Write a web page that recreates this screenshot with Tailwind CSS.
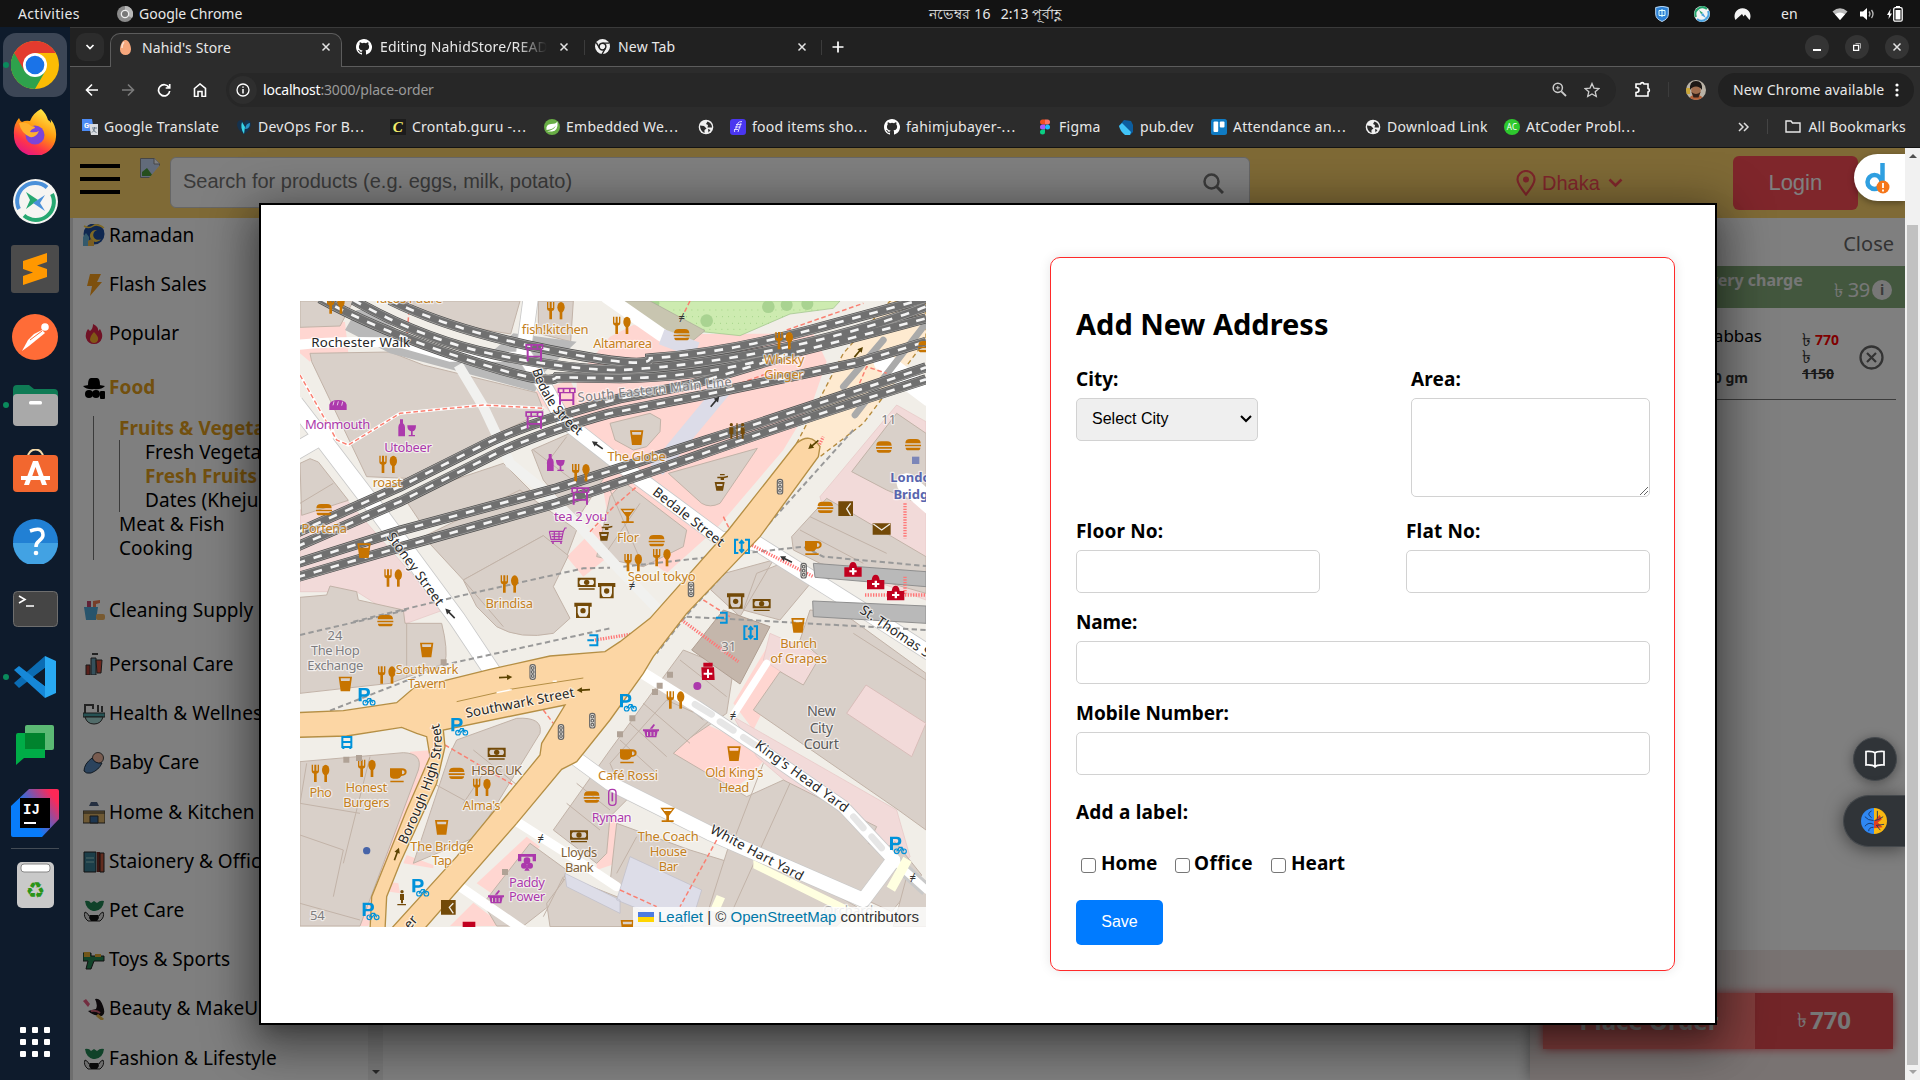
<!DOCTYPE html>
<html lang="en">
<head>
<meta charset="utf-8">
<title>Nahid's Store</title>
<script src="https://cdn.jsdelivr.net/npm/@tailwindcss/browser@4"></script>
</head>
<body class="w-[1920px] h-[1080px] overflow-hidden flex flex-col bg-[#0e1b2c] font-['Noto_Sans',sans-serif] text-[14px]">

<!-- shared symbols -->
<svg width="0" height="0" class="absolute">
  <defs>
    <symbol id="gh" viewBox="0 0 16 16"><path fill="#fff" d="M8 0C3.58 0 0 3.58 0 8c0 3.54 2.29 6.53 5.47 7.59.4.07.55-.17.55-.38 0-.19-.01-.82-.01-1.49-2.01.37-2.53-.49-2.69-.94-.09-.23-.48-.94-.82-1.13-.28-.15-.68-.52-.01-.53.63-.01 1.08.58 1.23.82.72 1.21 1.87.87 2.33.66.07-.52.28-.87.51-1.07-1.78-.2-3.64-.89-3.64-3.95 0-.87.31-1.59.82-2.15-.08-.2-.36-1.02.08-2.12 0 0 .67-.21 2.2.82a7.6 7.6 0 0 1 4 0c1.53-1.04 2.2-.82 2.2-.82.44 1.1.16 1.92.08 2.12.51.56.82 1.27.82 2.15 0 3.07-1.87 3.75-3.65 3.95.29.25.54.73.54 1.48 0 1.07-.01 1.93-.01 2.2 0 .21.15.46.55.38A8 8 0 0 0 8 0z"/></symbol>
    <symbol id="x" viewBox="0 0 10 10"><path d="M1.5 1.5l7 7M8.5 1.5l-7 7" stroke="#e3e3e3" stroke-width="1.5"/></symbol>
    <symbol id="globe" viewBox="0 0 16 16"><circle cx="8" cy="8" r="7.3" fill="#f0f0f0"/><path d="M2 6.500l4 .5 2.500 2.500-2 1.500v3Q2 12 2 6.500zM9.500 2.500L8 5l2 1-.5 2.500H14Q14 4 9.500 2.500zM10 10l2.500 1-2 2.500z" fill="#2c2c2c"/></symbol>
    <symbol id="mono" viewBox="0 0 16 16"><circle cx="8" cy="8" r="8" fill="#f1f1f1"/><circle cx="8" cy="8" r="3.6" fill="#f1f1f1" stroke="#222" stroke-width="1.600"/><path d="M8 4.400h7M4.900 9.800L1.400 3.800M11.100 9.800L7.600 16" stroke="#222" stroke-width="1.500"/></symbol>
  </defs>
</svg>

<!-- GNOME top bar -->
<header class="h-[27px] shrink-0 bg-[#131313] text-[#e8e8e8] flex items-center relative">
  <span class="pl-[18px] w-[117px] tracking-[0.35px]">Activities</span>
  <svg class="size-4 mr-[6px]" viewBox="0 0 16 16"><circle cx="8" cy="8" r="8" fill="#8a8a8a"/><path d="M8 8V0a8 8 0 0 1 7 12z" fill="#b8b8b8"/><circle cx="8" cy="8" r="4.300" fill="#eee"/><circle cx="8" cy="8" r="3" fill="#777"/></svg>
  <span>Google Chrome</span>
  <div class="absolute left-[929px] top-0 h-[26px] flex items-center gap-[10px] whitespace-nowrap"><span class="tracking-[0.3px]">নভেম্বর 16</span><span>2:13 পূর্বাহ্ণ</span></div>
  <div class="ml-auto flex items-center">
    <svg class="w-[14px] h-4 mr-[25px]" viewBox="0 0 14 16"><path d="M.7 1.500Q7-.8 13.300 1.500V8q0 5-6.300 7.500Q.7 13 .7 8z" fill="#2e82d6" stroke="#b9d9f5"/><path d="M4 4.500h6v5H4zM7 3v8" fill="none" stroke="#dff" stroke-width="1"/></svg>
    <svg class="size-4 mr-[24px]" viewBox="0 0 16 16"><circle cx="8" cy="8" r="8" fill="#f4f4f4"/><path d="M2 11A7 7 0 0 1 13 3" stroke="#25a36c" stroke-width="2" fill="none"/><path d="M14 5A7 7 0 0 1 3 13" stroke="#4aa3e0" stroke-width="2" fill="none"/><path d="M5 4l4 3-2 1z" fill="#25a36c"/><path d="M9 7l3 5-5-3z" fill="#4aa3e0"/></svg>
    <svg class="w-[17px] h-4 mr-[30px]" viewBox="0 0 17 16"><path d="M1.500 14A8 8 0 1 1 15.500 14L11 8.500 9.500 10.500 8 8 3.500 12z" fill="#f4f4f4"/></svg>
    <span class="mr-[35px] w-[16px]">en</span>
    <svg class="w-4 h-3 mr-[12px]" viewBox="0 0 16 12"><path d="M8 12L.5 3.500Q8-3 15.500 3.500z" fill="#bbb"/><path d="M8 12L3 6.300Q8 2.500 13 6.300z" fill="#fff"/></svg>
    <svg class="w-[16px] h-[14px] mr-[11px]" viewBox="0 0 16 14"><path d="M0 4.500h3L7 1v12L3 9.500H0z" fill="#fff"/><path d="M9 4.500q2 2.500 0 5M11.500 3q3 4 0 8" stroke="#bbb" fill="none" stroke-width="1.300"/></svg>
    <svg class="w-[16px] h-[16px] mr-[17px]" viewBox="0 0 16 16"><path d="M3.500 3L0 9h2L1.500 13 5 7.500H3z" fill="#fff"/><rect x="6.700" y="1.700" width="8.500" height="13.500" rx="1.500" fill="none" stroke="#fff" stroke-width="1.300"/><path d="M9 0h4v1H9zM8.500 4h5v9.500h-5z" fill="#fff"/></svg>
  </div>
</header>

<div class="flex h-[1053px]">

<!-- dock -->
<nav class="w-[70px] shrink-0 bg-[#0e1b2c] pt-[4px] flex flex-col items-center">
  <div class="h-[68px] w-full flex items-center justify-center relative">
    <div class="w-[64px] h-[64px] rounded-[13px] bg-[#3c4656] flex items-center justify-center"><svg class="size-12" viewBox="0 0 48 48"><circle cx="24" cy="24" r="24" fill="#fbbc04"/><path d="M3.200 12A24 24 0 0 0 24 48L34.400 30 24 24z" fill="#2ea24c"/><path d="M3.200 12A24 24 0 0 1 44.800 12H24L13.600 30z" fill="#e33b2e"/><circle cx="24" cy="24" r="12" fill="#fff"/><circle cx="24" cy="24" r="9.300" fill="#1a73e8"/></svg></div>
    <i class="absolute left-[3px] top-[31px] size-[6px] rounded-full bg-[#0a8a5c]"></i>
  </div>
  <div class="h-[68px] flex items-center pb-[2px]"><svg class="w-[44px] h-[46px]" viewBox="0 0 44 46"><defs><linearGradient id="ff" x1=".8" y1="0" x2=".3" y2="1"><stop offset="0" stop-color="#fff44f"/><stop offset=".45" stop-color="#ff980e"/><stop offset=".75" stop-color="#ff3647"/><stop offset="1" stop-color="#e31587"/></linearGradient></defs><path d="M28 0Q33 4 35 11q2 1 3 3 0-2-.5-4Q44 18 43 28A21 20 0 0 1 1 26Q0 16 6 9q1 3 3 4 4-2 8-1 3-8 11-12z" fill="url(#ff)"/><circle cx="22" cy="26" r="9.500" fill="#7b45d8"/><path d="M6 14q8-2 12 3 4 0 4 2-4 1-5 4 6 1 9-1-3 7-9 6Q8 24 6 14z" fill="#ffb02e"/></svg></div>
  <div class="h-[68px] flex items-center"><svg class="size-[45px]" viewBox="0 0 45 45"><circle cx="22.500" cy="22.500" r="22.500" fill="#f6f5f2"/><path d="M6 30A18 18 0 0 1 34 8.500" stroke="#4a90d9" stroke-width="4" fill="none"/><path d="M39 15A18 18 0 0 1 11 36.500" stroke="#27a871" stroke-width="4" fill="none"/><path d="M13 13l12 8-12 9 4-9z" fill="#27a871"/><path d="M32 16l-12 8 12 8-5-8z" fill="#4a90d9"/></svg></div>
  <div class="h-[68px] flex items-center"><svg class="size-12" viewBox="0 0 48 48"><rect width="48" height="48" rx="3" fill="#4b4b4b"/><path d="M12 16L36 8v9l-10 3.500L36 24v8l-24 8v-9l10-3.500L12 24z" fill="#ff9800"/></svg></div>
  <div class="h-[68px] flex items-center"><svg class="size-[46px]" viewBox="0 0 46 46"><circle cx="23" cy="23" r="23" fill="#ff6c37"/><circle cx="33" cy="13" r="3.800" fill="#fff"/><path d="M30 16l3 3-16 13-7 5 6-11 6-6z" fill="#fff"/><path d="M18 26l12-9" stroke="#ff6c37"/></svg></div>
  <div class="h-[68px] w-full flex items-center justify-center relative"><svg class="w-[45px] h-[41px]" viewBox="0 0 45 41"><path d="M0 4q0-4 4-4h12l5 4h20q4 0 4 4v10H0z" fill="#0f7b55"/><rect y="9" width="45" height="32" rx="4" fill="#a9a9a9"/><rect x="16" y="16" width="13" height="3.500" rx="1.500" fill="#fff"/></svg><i class="absolute left-[3px] top-[31px] size-[6px] rounded-full bg-[#0a8a5c]"></i></div>
  <div class="h-[68px] flex items-center pb-[6px]"><svg class="w-[45px] h-[43px]" viewBox="0 0 45 43"><path d="M15 8a7.500 7.500 0 0 1 15 0" fill="none" stroke="#f4d9a8" stroke-width="2"/><rect y="6" width="45" height="37" rx="4" fill="#f2672f"/><path d="M11 36L20 12h5l9 24h-5L22.500 18 16 36zM8 27h29v4H8z" fill="#fff"/></svg></div>
  <div class="h-[68px] flex items-center"><svg class="size-[45px]" viewBox="0 0 45 45"><circle cx="22.500" cy="22.500" r="22.500" fill="#2180d4"/><path d="M0 24h45a22.500 22.500 0 0 1-45 0z" fill="#42a2e3"/><path d="M17 12q13-5 13 4 0 3-4 6-3 2-3 6" fill="none" stroke="#fff" stroke-width="3.500"/><circle cx="23" cy="34" r="2.300" fill="#fff"/></svg></div>
  <div class="h-[68px] flex items-center"><svg class="w-[45px] h-[36px]" viewBox="0 0 45 36"><rect x=".5" y=".5" width="44" height="35" rx="4" fill="#454545" stroke="#6e6e6e"/><path d="M6 5l6 3.500L6 12M13 15h8" fill="none" stroke="#fff" stroke-width="1.600"/></svg></div>
  <div class="h-[68px] w-full flex items-center justify-center relative"><svg class="size-[42px]" viewBox="0 0 42 42"><path d="M0 27L31 0v12L5 32z" fill="#0b6cb3"/><path d="M0 14l5-4 26 20v12z" fill="#1688d8"/><path d="M31 0l11 5v32l-11 5z" fill="#29a9f2"/><path d="M31 12v18L19 21z" fill="#0e1b2c"/></svg><i class="absolute left-[3px] top-[31px] size-[6px] rounded-full bg-[#0a8a5c]"></i></div>
  <div class="h-[68px] flex items-center"><svg class="w-[38px] h-[40px]" viewBox="0 0 38 40"><rect x="9" width="29" height="25" rx="2" fill="#5bb974"/><path d="M0 10q0-2 2-2h25q2 0 2 2v23H8l-8 7z" fill="#00ac47"/><path d="M9 8h20v16H9z" fill="#00832d"/></svg></div>
  <div class="h-[68px] flex items-center"><svg class="size-12" viewBox="0 0 48 48"><defs><linearGradient id="ij" x1="0" y1=".8" x2="1" y2=".1"><stop offset=".35" stop-color="#087cfa"/><stop offset=".9" stop-color="#fe2857"/></linearGradient></defs><path d="M18 0h28q2 0 2 2v28L31 48H2q-2 0-2-2V17z" fill="url(#ij)"/><path d="M9 9h30v30H9z"/><path d="M13 34h12" stroke="#fff" stroke-width="2"/><text x="12" y="25" font-family="Liberation Mono" font-weight="700" font-size="14" fill="#fff">IJ</text></svg></div>
  <div class="w-12 h-px bg-[#444c55] mt-[1px]"></div>
  <div class="h-[71px] flex items-center"><svg class="w-[37px] h-[46px]" viewBox="0 0 37 46"><rect width="37" height="46" rx="5" fill="#c9c9c9"/><rect x="4" y="2" width="29" height="8" rx="3" fill="#fff" stroke="#888"/><text x="18.500" y="36" text-anchor="middle" font-family="DejaVu Sans" font-size="22" fill="#2a9417">♻</text></svg></div>
  <div class="mt-auto mb-[23px] grid grid-cols-3 gap-[6px]"><i class="size-[6px] bg-white rounded-[1px]"></i><i class="size-[6px] bg-white rounded-[1px]"></i><i class="size-[6px] bg-white rounded-[1px]"></i><i class="size-[6px] bg-white rounded-[1px]"></i><i class="size-[6px] bg-white rounded-[1px]"></i><i class="size-[6px] bg-white rounded-[1px]"></i><i class="size-[6px] bg-white rounded-[1px]"></i><i class="size-[6px] bg-white rounded-[1px]"></i><i class="size-[6px] bg-white rounded-[1px]"></i></div>
</nav>

<main class="w-[1850px] flex flex-col text-[#e8e8e8]">
  <!-- tab strip -->
  <div class="h-[40px] shrink-0 bg-[#212121] border-t border-[#3a3a3a] flex relative">
    <div class="absolute left-0 right-0 bottom-0 h-px bg-[#5c5c5c]"></div>
    <div class="w-[28px] h-[28px] ml-[6px] mt-[5px] rounded-[9px] bg-[#2c2c2c] flex items-center justify-center"><svg class="size-[10px]" viewBox="0 0 10 10"><path d="M1.500 3L5 6.500 8.500 3" fill="none" stroke="#fff" stroke-width="1.700"/></svg></div>
    <div class="relative z-10 ml-[6px] mt-[5px] w-[232px] h-[34px] rounded-t-[10px] bg-[#2c2c2c] border border-b-0 border-[#5c5c5c] flex items-center pl-[9px] pb-[7px]">
      <svg class="w-[11px] h-[15px] mr-[11px]" viewBox="0 0 11 15"><path d="M5.500 0C9 0 11 6 11 9.500a5.500 5.500 0 0 1-11 0C0 6 2 0 5.500 0z" fill="#f7a77c"/><path d="M4 2Q1.500 5 2 8" stroke="#fde0cf" stroke-width="1.500" fill="none"/></svg>
      <span class="w-[179px] tracking-[0.15px]">Nahid's Store</span><svg class="size-[10px]"><use href="#x"/></svg>
    </div>
    <div class="ml-[14px] w-[228px] h-[39px] flex items-center pb-[2px]">
      <svg class="size-4 mr-[8px]"><use href="#gh"/></svg><span class="w-[167px] mr-[12px] overflow-hidden whitespace-nowrap tracking-[0.15px] [mask-image:linear-gradient(to_right,black_82%,transparent)]">Editing NahidStore/READ</span><svg class="size-[10px]"><use href="#x"/></svg>
    </div>
    <div class="w-px h-[15px] mt-[12px] bg-[#3c3c3c]"></div>
    <div class="ml-[10px] w-[226px] h-[39px] flex items-center pb-[2px]">
      <svg class="size-[15px] mr-[8px]"><use href="#mono"/></svg><span class="w-[179px] tracking-[0.2px]">New Tab</span><svg class="size-[10px]"><use href="#x"/></svg>
    </div>
    <div class="w-px h-[15px] mt-[12px] bg-[#3c3c3c]"></div>
    <svg class="size-[12px] ml-[10px] mt-[13px]" viewBox="0 0 12 12"><path d="M6 .5v11M.5 6h11" stroke="#fff" stroke-width="1.700"/></svg>
    <div class="ml-auto mr-[11px] mt-[7px] flex gap-[16px]">
      <div class="size-6 rounded-full bg-[#343434] flex items-center justify-center"><i class="w-[8px] h-[1.500px] bg-white mt-[6px]"></i></div>
      <div class="size-6 rounded-full bg-[#343434] flex items-center justify-center"><svg class="size-[8px]" viewBox="0 0 8 8"><path d="M.6 2.400h5v5h-5z" stroke="#fff" stroke-width="1.300" fill="none"/><path d="M2.500.5h5v5" stroke="#aaa" fill="none"/></svg></div>
      <div class="size-6 rounded-full bg-[#343434] flex items-center justify-center"><svg class="size-[10px]"><use href="#x"/></svg></div>
    </div>
  </div>
  <!-- toolbar -->
  <div class="h-[46px] shrink-0 bg-[#2c2c2c] flex items-center pl-[15px] pr-[6px] pb-[1px]">
    <svg class="size-[14px] mr-[22px]" viewBox="0 0 14 14"><path d="M13 7H2M7 1.500L1.500 7 7 12.500" fill="none" stroke="#fff" stroke-width="1.600"/></svg>
    <svg class="size-[14px] mr-[22px]" viewBox="0 0 14 14"><path d="M1 7h11M7 1.500L12.500 7 7 12.500" fill="none" stroke="#7b7b7b" stroke-width="1.600"/></svg>
    <svg class="size-[14px] mr-[22px]" viewBox="0 0 14 14"><path d="M12 4.500A5.600 5.600 0 1 0 12.700 8M12.700 1v4H8.700" fill="none" stroke="#fff" stroke-width="1.700"/></svg>
    <svg class="size-[14px] mr-[19px]" viewBox="0 0 14 14"><path d="M1.500 5.500L7 1l5.500 4.500v8H9V8.500H5v5H1.500z" fill="none" stroke="#fff" stroke-width="1.600"/></svg>
    <div class="w-[1390px] h-[34px] rounded-full bg-[#272727] flex items-center pl-[3px]">
      <div class="size-[28px] rounded-full bg-[#2e2e2e] flex items-center justify-center"><svg class="size-[14px]" viewBox="0 0 14 14"><circle cx="7" cy="7" r="6" fill="none" stroke="#fff" stroke-width="1.300"/><path d="M7 6v4.500M7 3.500v1.300" stroke="#fff" stroke-width="1.500"/></svg></div>
      <span class="ml-[6px] text-[#9a9a9a] tracking-[-0.19px]"><span class="text-white">localhost</span>:3000/place-order</span>
      <svg class="size-[15px] ml-auto mr-[17px]" viewBox="0 0 15 15"><circle cx="5.800" cy="5.800" r="4.600" fill="none" stroke="#ccc" stroke-width="1.500"/><path d="M9.300 9.300L14 14" stroke="#ccc" stroke-width="1.800"/><path d="M3.800 5.800h4M5.800 3.800v4" stroke="#ccc"/></svg>
      <svg class="size-[16px] mr-[16px]" viewBox="0 0 16 16"><path d="M8 1.500l2 4.600 4.900.4-3.700 3.200 1.100 4.800L8 12l-4.300 2.500 1.100-4.800L1.100 6.500 6 6.100z" fill="none" stroke="#ccc" stroke-width="1.300"/></svg>
    </div>
    <svg class="w-[17px] h-[17px] ml-[18px] mr-[17px]" viewBox="0 0 17 17"><path d="M2 3h4.500a1.800 1.800 0 0 1 3.500 0h4v4.500a1.800 1.800 0 0 1 0 3.500v4H2v-3.500q3 0 3-2.500T2 6.500z" fill="none" stroke="#fff" stroke-width="1.600"/></svg>
    <div class="w-px h-[15px] bg-[#3c3c3c]"></div>
    <svg class="size-[20px] ml-[17px] mr-[12px]" viewBox="0 0 20 20"><defs><clipPath id="av"><circle cx="10" cy="10" r="10"/></clipPath></defs><g clip-path="url(#av)"><path d="M0 0h20v20H0z" fill="#b9b2a6"/><path d="M0 8h4v6H0z" fill="#caa534"/><path d="M3 20q0-5 7-5t7 5z" fill="#b5623a"/><ellipse cx="10" cy="10.500" rx="4.800" ry="6" fill="#a06d4d"/><path d="M4 10Q3 1 10 1t6 9Q14 6.500 10 6.500T4 10z" fill="#1d1815"/><path d="M5.500 12q4.500 4 9 0l-2 5.500h-5z" fill="#33211a"/></g></svg>
    <div class="w-[196px] h-[34px] rounded-full bg-[#212121] flex items-center pl-[15px] whitespace-nowrap"><span class="w-[151px] tracking-[0.22px]">New Chrome available</span><svg class="w-[4px] h-[14px] ml-[11px]" viewBox="0 0 4 14"><circle cx="2" cy="2" r="1.600" fill="#fff"/><circle cx="2" cy="7" r="1.600" fill="#fff"/><circle cx="2" cy="12" r="1.600" fill="#fff"/></svg></div>
  </div>
  <!-- bookmarks -->
  <div class="h-[35px] shrink-0 bg-[#2c2c2c] border-b border-[#141414] flex items-center pl-[12px] pb-[7px] whitespace-nowrap tracking-[0.26px]">
    <div class="w-[154px] flex items-center gap-[6px]"><svg class="size-4" viewBox="0 0 16 16"><path d="M0 0h10l2 12H0z" fill="#4c8bf5"/><path d="M7 5h9v11H9z" fill="#d9dce0"/><text x="2" y="8.500" font-size="7.500" font-weight="700" font-family="Roboto" fill="#fff">G</text><path d="M10 9h5M12.500 8v1q0 3-2.500 4.500M11 10q1 3 3.500 3.500" stroke="#607080" fill="none" stroke-width=".9"/></svg><span>Google Translate</span></div>
    <div class="w-[154px] flex items-center gap-[6px]"><svg class="size-4" viewBox="0 0 16 16"><path d="M1 6q0-5 5-5l2 3 2-3q5 0 5 5-1 6-7 9Q2 12 1 6z" fill="#15324e"/><path d="M6 3l3 5-1 7Q4 9 6 3z" fill="#38d5e8"/><path d="M14 4q-4 0-5 6 5 0 5-6z" fill="#2793c9"/></svg><span>DevOps For B<span class="tracking-[1.300px]">...</span></span></div>
    <div class="w-[154px] flex items-center gap-[6px]"><div class="size-4 bg-[#1c1c1c] text-[#f5ee6a] italic font-bold leading-4 text-center text-[15px] font-['Liberation_Serif',serif]">C</div><span>Crontab.guru -<span class="tracking-[1.300px]">...</span></span></div>
    <div class="w-[154px] flex items-center gap-[6px]"><svg class="size-4" viewBox="0 0 16 16"><circle cx="8" cy="8" r="8" fill="#68ad45"/><path d="M13.500 2.500q.8 9.500-5.500 10-3 0-5 0 7-1.500 9-6-3 4-9.500 4.500Q1.500 5.500 7 5q5 0 6.500-2.500z" fill="#fff"/></svg><span>Embedded We<span class="tracking-[1.300px]">...</span></span></div>
    <div class="w-[32px]"><svg class="size-4"><use href="#globe"/></svg></div>
    <div class="w-[154px] flex items-center gap-[6px]"><svg class="size-4" viewBox="0 0 16 16"><rect width="16" height="16" rx="3" fill="#4a36f0"/><path d="M5 13q-2-1 .5-2.500L8 4q1-1.500 4-1.500M5 8h5.500M6 5.500h5.500M4 10.500h4M8 13l3-9" stroke="#ddd8ff" fill="none"/></svg><span>food items sho<span class="tracking-[1.300px]">...</span></span></div>
    <div class="w-[153px] flex items-center gap-[6px]"><svg class="size-4"><use href="#gh"/></svg><span>fahimjubayer-<span class="tracking-[1.300px]">...</span></span></div>
    <div class="w-[81px] flex items-center gap-[6px]"><svg class="size-4" viewBox="0 0 16 16"><path d="M8 .5H5.500a2.500 2.500 0 0 0 0 5H8z" fill="#f24e1e"/><path d="M8 .5h2.500a2.500 2.500 0 0 1 0 5H8z" fill="#ff7262"/><path d="M8 5.500H5.500a2.500 2.500 0 0 0 0 5H8z" fill="#a259ff"/><circle cx="10.500" cy="8" r="2.500" fill="#1abcfe"/><path d="M8 10.500H5.500A2.500 2.500 0 1 0 8 13z" fill="#0acf83"/></svg><span>Figma</span></div>
    <div class="w-[93px] flex items-center gap-[6px]"><svg class="size-4" viewBox="0 0 16 16"><path d="M1 7l5-6 7 1 2 4v7l-3 3H8z" fill="#0c5d9f"/><path d="M1 7l3-3 9 9-1 3H7q-5-4-6-9z" fill="#41c4f7"/></svg><span class="tracking-[0.05px]">pub.dev</span></div>
    <div class="w-[154px] flex items-center gap-[6px]"><svg class="size-4" viewBox="0 0 16 16"><rect width="16" height="16" rx="2.500" fill="#0f7bc4"/><rect x="2.500" y="2.500" width="4.700" height="10.500" rx="1" fill="#fff"/><rect x="8.800" y="2.500" width="4.700" height="6" rx="1" fill="#fff"/></svg><span>Attendance an<span class="tracking-[1.300px]">...</span></span></div>
    <div class="w-[139px] flex items-center gap-[6px]"><svg class="size-4"><use href="#globe"/></svg><span>Download Link</span></div>
    <div class="w-[154px] flex items-center gap-[6px]"><div class="size-4 rounded-full bg-[#2ec82e] text-white text-[8px] leading-4 text-center">AC</div><span>AtCoder Probl<span class="tracking-[1.300px]">...</span></span></div>
    <svg class="w-[12px] h-[10px] ml-auto" viewBox="0 0 12 10"><path d="M1 1l4 4-4 4M6 1l4 4-4 4" fill="none" stroke="#ddd" stroke-width="1.500"/></svg>
    <div class="w-px h-[15px] ml-[17px] mr-[17px] bg-[#444]"></div>
    <svg class="w-[16px] h-[13px] mr-[7px]" viewBox="0 0 16 13"><path d="M1 1h5l1.500 2H15v9H1z" fill="none" stroke="#e8e8e8" stroke-width="1.400"/></svg>
    <span class="mr-[14px]">All Bookmarks</span>
  </div>

  <!-- page viewport -->
  <div class="h-[932px] flex relative overflow-hidden">
    <div class="w-[1835px] h-[932px] relative bg-white text-black flex flex-col overflow-hidden">
      <div class="h-[70px] shrink-0 bg-[#ffd56c] flex relative">
        <div class="ml-[10px] mt-[16px] w-[40px] flex flex-col gap-[9px]"><i class="h-[4px] bg-black"></i><i class="h-[4px] bg-black"></i><i class="h-[4px] bg-black"></i></div>
        <svg class="w-[20px] h-[20px] ml-[20px] mt-[10px]" viewBox="0 0 20 20"><path d="M.5.500h14l5 5v14H.5z" fill="#c5d6f5" stroke="#8c8c8c"/><path d="M14 0v6h6" fill="#fff" stroke="#8c8c8c"/><path d="M2 18V14l5-4 6 8z" fill="#4d9d3c"/><path d="M20 7L9 20h11z" fill="#ffd56c"/></svg>
        <div class="ml-[10px] mt-[9px] w-[1080px] h-[51px] rounded-[6px] bg-white border border-[#ccc] flex items-center pl-[12px] pb-[4px] text-[20px] text-[#757575] font-['Liberation_Sans',sans-serif]">Search for products (e.g. eggs, milk, potato)
          <svg class="size-[21px] ml-auto mr-[25px] mt-[6px]" viewBox="0 0 21 21"><circle cx="8.500" cy="8.500" r="7" fill="none" stroke="#777" stroke-width="2.500"/><path d="M13.500 13.500L20 20" stroke="#777" stroke-width="3"/></svg></div>
        <div class="ml-[266px] flex items-center text-[20px] text-[#ff4c57] font-['Liberation_Sans',sans-serif]">
          <svg class="w-[20px] h-[26px] mr-[6px]" viewBox="0 0 20 26"><path d="M10 24.500Q1.500 14 1.500 9.500a8.500 8.500 0 0 1 17 0Q18.500 14 10 24.500z" fill="none" stroke="#ff4c57" stroke-width="2.200"/><circle cx="10" cy="9.500" r="3" fill="#ff4c57"/></svg>Dhaka
          <svg class="w-[15px] h-[10px] ml-[8px]" viewBox="0 0 15 10"><path d="M1.500 1.500l6 6 6-6" fill="none" stroke="#ff4c57" stroke-width="2.600"/></svg></div>
        <div class="ml-[110px] mt-[8px] w-[125px] h-[54px] rounded-[6px] bg-[#ff4c57] text-white flex items-center justify-center pb-[1px] text-[22px] font-['Liberation_Sans',sans-serif]">Login</div>
      </div>

      <div class="h-[862px] flex">
        <!-- categories -->
        <aside class="w-[313px] shrink-0 border-l-[3px] border-[#dcdcdc] relative text-[19px] tracking-[0.06px] flex">
          <div class="w-[295px] pl-[10px] whitespace-nowrap flex flex-col">
            <div class="h-[43px] pb-[9px] flex items-center gap-[4px] shrink-0"><svg class="size-[22px]" viewBox="0 0 22 22"><circle cx="11" cy="10" r="10.500" fill="#1f4fa0"/><path d="M14 6a6 6 0 1 0 4 9 5 5 0 1 1-4-9z" fill="#ffd24a"/><path d="M1 2q5 3 9 0t11 2" stroke="#ffd24a" fill="none" stroke-width="1.500"/><path d="M0 22v-9l3-4 3 4v9z" fill="#66b3d8"/><path d="M5 22v-5l3-2 3 2v5z" fill="#f5ba45"/></svg>Ramadan</div>
            <div class="h-[47px] shrink-0 flex items-center gap-[4px]"><svg class="size-[22px]" viewBox="0 0 22 22"><path d="M7 0h11l-4 8h5L7 22l2-10H4z" fill="#fba01d"/></svg>Flash Sales</div>
            <div class="h-[51px] shrink-0 flex items-center gap-[4px]"><svg class="size-[22px]" viewBox="0 0 22 22"><path d="M10 1q6 3 5 7l2-2q3 5 2 9-2 6-8 6t-8-6q-1-5 2-9l2 2q3-2 3-7z" fill="#e0244b"/><path d="M11 9q5 5 4 8-1 3-4 3t-4-3q0-4 4-8z" fill="#ffae2c"/></svg>Popular</div>
            <div class="h-[56px] shrink-0 pt-[1px] flex items-center gap-[4px] font-bold text-[#e4a01c]"><svg class="size-[22px]" viewBox="0 0 22 22"><path d="M5 8Q5 1 8 1h6q3 0 3 7zM0 9q11-3 22 0-4 4-11 3Q4 13 0 9z" fill="#000"/><circle cx="6" cy="17" r="4" fill="#000"/><circle cx="13" cy="17" r="4" fill="#000"/><rect x="17" y="14" width="5" height="8" rx="1" fill="#000"/></svg>Food</div>
            <div class="ml-[10px] mt-[1px] h-[144px] shrink-0 border-l border-[#777] pl-[25px] leading-[24px] flex flex-col">
              <span class="h-[24px] font-bold text-[#e4a01c]">Fruits &amp; Vegetables</span>
              <div class="border-l border-[#777] pl-[25px] flex flex-col h-[72px]"><span>Fresh Vegetables</span><span class="font-bold text-[#e4a01c]">Fresh Fruits</span><span>Dates (Khejur)</span></div>
              <span>Meat &amp; Fish</span><span>Cooking</span>
            </div>
            <div class="mt-[23px] h-[54px] shrink-0 flex items-center gap-[4px]"><svg class="size-[22px]" viewBox="0 0 22 22"><path d="M4 2h4v8H4z" fill="#c2446f"/><path d="M10 2l7-1v3l-4 1v5h-3z" fill="#ee7b52"/><path d="M1 8h14l-2 13H3z" fill="#50a8d8"/><rect x="13" y="15" width="9" height="6" rx="2" fill="#f1b463"/></svg>Cleaning Supply</div>
            <div class="h-[54px] shrink-0 flex items-center gap-[4px]"><svg class="size-[22px]" viewBox="0 0 22 22"><path d="M8 5h5v17H8z" fill="#6ba0b6" stroke="#333"/><path d="M9 1h6" stroke="#444" stroke-width="2"/><path d="M13 7h6l-1 13h-4z" fill="#e0503d" stroke="#333"/><path d="M3 12h4v10H3z" fill="#b33f34" stroke="#333"/></svg>Personal Care</div>
            <div class="h-[45px] shrink-0 flex items-center gap-[4px]"><svg class="size-[22px]" viewBox="0 0 22 22"><path d="M2 10V2h8v4M15 9V2M19 9V3" stroke="#444" fill="none" stroke-width="2"/><path d="M0 10h22v4H0z" fill="#4da5a8" stroke="#333"/><path d="M2 14h18q-2 7-9 7t-9-7z" fill="#a4d8d4" stroke="#333"/></svg>Health &amp; Wellness</div>
            <div class="h-[53px] shrink-0 flex items-center gap-[4px]"><svg class="size-[22px]" viewBox="0 0 22 22"><circle cx="15" cy="6" r="5.500" fill="#f2b8a0" stroke="#444"/><path d="M9 6q-8 6-8 13 2 3 7 2 8-3 11-10-7 1-10-5z" fill="#5686ba" stroke="#234"/></svg>Baby Care</div>
            <div class="mt-[1px] h-[45px] shrink-0 flex items-center gap-[4px]"><svg class="size-[22px]" viewBox="0 0 22 22"><path d="M8 0h6l2 4H6z" fill="#4a5f80"/><path d="M0 9h22v12H0z" fill="#dcb269" stroke="#333"/><path d="M0 11h22M7 14h8v7H7z" stroke="#333" fill="#3b6ca0"/></svg>Home &amp; Kitchen</div>
            <div class="h-[53px] shrink-0 flex items-center gap-[4px]"><svg class="size-[22px]" viewBox="0 0 22 22"><path d="M1 1h12v20H1z" fill="#387d92" stroke="#222"/><path d="M3 7h8M3 11h8" stroke="#9cc"/><path d="M14 1h3v20h-3z" fill="#732b24"/><path d="M17 2h4v19h-4z" fill="#c45a3f" stroke="#222"/></svg>Staionery &amp; Office</div>
            <div class="h-[45px] shrink-0 flex items-center gap-[4px]"><svg class="size-[22px]" viewBox="0 0 22 22"><path d="M2 1q4-1 6 2l3-2 3 2q3-3 7-2-1 9-9 10h-2Q3 9 2 1z" fill="#208553"/><path d="M2 12q-2 5 3 9h12q5-4 3-9-3 1-4 4H6q-1-3-4-4z" fill="#ddd" stroke="#222"/><path d="M7 15h8l1 3-2 3H8l-2-3z" fill="#111"/></svg>Pet Care</div>
            <div class="h-[53px] shrink-0 flex items-center gap-[4px]"><svg class="size-[22px]" viewBox="0 0 22 22"><path d="M0 4h8v3h13v5H11l-3 8H3l2-8H0z" fill="#258854" stroke="#222"/><path d="M1 3h6v5H1zM12 5h6v3h-6z" fill="#e4ac33"/></svg>Toys &amp; Sports</div>
            <div class="h-[45px] shrink-0 flex items-center gap-[4px]"><svg class="size-[22px]" viewBox="0 0 22 22"><path d="M0 3l3-2 4 5-2 3z" fill="#e65b80"/><path d="M12 1q5-2 8 7 3 8-1 10-9 0-14-5l8-2q2-4-1-10z" fill="#1b1518"/><path d="M8 13q6-1 9 2" stroke="#cf5f74" stroke-width="2" fill="none"/><path d="M14 17l6 5" stroke="#e6b64b" stroke-width="3"/></svg>Beauty &amp; MakeUp</div>
            <div class="mt-[1px] h-[53px] shrink-0 flex items-center gap-[4px]"><svg class="size-[22px]" viewBox="0 0 22 22"><path d="M2 1q4-1 6 2l3-2 3 2q3-3 7-2-1 9-9 10h-2Q3 9 2 1z" fill="#208553"/><path d="M2 12q-2 5 3 9h12q5-4 3-9-3 1-4 4H6q-1-3-4-4z" fill="#ddd" stroke="#222"/><path d="M7 15h8l1 3-2 3H8l-2-3z" fill="#111"/></svg>Fashion &amp; Lifestyle</div>
          </div>
          <div class="w-[15px] bg-[#f1f1f1] flex items-end justify-center pb-[6px]"><i class="border-x-4 border-x-transparent border-t-4 border-t-[#505050]"></i></div>
        </aside>
        <div class="grow"></div>
        <!-- cart -->
        <section class="w-[375px] shrink-0 flex flex-col shadow-[0_0_14px_rgba(0,0,0,0.4)]">
          <div class="h-[48px] flex items-center justify-end pr-[11px] pt-[4px] text-[20px] text-[#666]">Close</div>
          <div class="h-[42px] bg-[#86ae7c] flex items-center justify-end pr-[13px] text-[#eee] text-[20px]"><span class="text-[16px] font-bold mr-[31px] mb-[14px]">Delivery charge</span><span class="flex items-center mt-[6px] tracking-[-0.3px] whitespace-nowrap"><span class="w-[14px] text-[19px]">৳</span>39</span><span class="size-[20px] ml-[2px] mt-[5px] rounded-full bg-[#eee] text-[#777] font-bold text-[14px] leading-[20px] text-center">i</span></div>
          <div class="h-[92px] mr-[9px] border-b border-[#777] flex justify-end">
            <div class="w-[86px] flex flex-col pt-[14px] text-right"><span class="text-[17px] leading-[28px] pr-[20px]">abbas</span><span class="text-[14px] font-bold text-[#333] leading-[20px] mt-[18px] pr-[34px]">500 gm</span></div>
            <div class="w-[54px] pt-[23px] ml-[20px] text-[14px] leading-[17px] font-bold flex flex-col text-[#333]"><span class="flex text-[#f00]"><span class="w-[13px] text-[#333] font-normal text-[18px]">৳</span>770</span><span class="font-normal text-[18px]">৳</span><span class="line-through">1150</span></div>
            <svg class="size-[25px] mt-[37px] mr-[12px] ml-[3px]" viewBox="0 0 25 25"><circle cx="12.500" cy="12.500" r="11" fill="none" stroke="#666" stroke-width="2.300"/><path d="M8 8l9 9M17 8l-9 9" stroke="#666" stroke-width="2.200"/></svg>
          </div>
          <div class="grow"></div>
          <div class="h-[130px] bg-[#f2e7e5] pt-[43px] pl-[13px]">
            <div class="flex h-[56px] w-[350px] shadow-[0_0_9px_#e8505a] text-[24px] font-bold text-[#eee]">
              <div class="w-[212px] bg-[#ff7a78] flex items-center justify-center">Place Order</div>
              <div class="w-[138px] bg-[#e44a50] flex items-center justify-center pb-[2px] text-[24px]"><span class="w-[13px] text-[20px] font-normal">৳</span>770</div>
            </div>
          </div>
        </section>
      </div>
      <div class="absolute inset-0 bg-black/50"></div>
      <!-- floating extension widgets -->
      <div class="absolute right-0 top-[6px] w-[51px] h-[47px] rounded-l-full bg-white flex items-center pl-[11px] shadow-[0_2px_6px_rgba(0,0,0,0.35)]"><svg class="w-[26px] h-[32px]" viewBox="0 0 26 32"><circle cx="9.500" cy="20" r="7" fill="none" stroke="#2f9fe0" stroke-width="4.500"/><path d="M17.500 1v26" stroke="#2f9fe0" stroke-width="4.500"/><circle cx="18" cy="25" r="6.500" fill="#f5761a"/><path d="M18 21v5M18 27.500v2" stroke="#fff" stroke-width="1.800"/></svg></div>
      <div class="absolute left-[1783px] top-[589px] size-[44px] rounded-full bg-[#303438] border border-[#45494d] flex items-center justify-center shadow-[0_2px_12px_rgba(0,0,0,0.4)]"><svg class="w-[20px] h-[18px]" viewBox="0 0 20 18"><path d="M10 3Q8 1 1 1.500V15q7-.5 9 2 2-2.500 9-2V1.500Q12 1 10 3zV17" fill="none" stroke="#fff" stroke-width="1.700"/></svg></div>
      <div class="absolute right-0 top-[647px] w-[62px] h-[52px] rounded-l-full bg-[#303438] border border-r-0 border-[#45494d] flex items-center pl-[17px] shadow-[0_2px_18px_rgba(0,0,0,0.5)]"><svg class="size-[26px]" viewBox="0 0 27 27"><path d="M13.500 0a13.500 13.500 0 0 0 0 27z" fill="#2f87f2"/><path d="M13.500 0a13.500 13.500 0 0 1 0 27z" fill="#f9b812"/><path d="M13.500 14l6-7 2 5-4 3 5 5-9 1z" fill="#e2401f"/><path d="M11 3q-6 3 0 7M4 9q3 4 9 4M4 19q4-5 9-2M8 24q0-4 5-4M17 3v8M23 9q-5 4-9 4M24 17l-8 1 4 5" stroke="#14305f" fill="none" stroke-width=".9"/></svg></div>

      <!-- address dialog -->
      <div class="absolute left-[189px] top-[55px] w-[1458px] h-[822px] bg-white border-2 border-black shadow-[0_11px_15px_-7px_rgba(0,0,0,0.2),0_24px_38px_3px_rgba(0,0,0,0.14),0_9px_46px_8px_rgba(0,0,0,0.4)] flex">
        <div class="ml-[39px] mt-[96px] w-[626px] h-[626px] relative overflow-hidden">
          <svg class="size-[626px]" viewBox="30 33 1878 1878" font-family="'Noto Sans',sans-serif" font-size="39">
            <defs>
              <g id="fork"><path d="M-26-26v20q0 6 7 7v25h8V1q7-1 7-7v-20h-4v18h-4v-18h-6v18h-4v-18z"/><ellipse cx="16" cy="-10" rx="11" ry="16"/><path d="M12 0h8v26h-8z"/></g>
              <g id="burger"><path d="M-23-4q0-13 14-13H9q14 0 14 13zM-24 0h48v5h-48zM-22 9h44q0 8-8 8h-28q-8 0-8-8z"/></g>
              <g id="pint"><path d="M-20-22h40l-6 44h-28zM-14-17l1 8h26l1-8z" fill-rule="evenodd"/></g>
              <g id="cup"><path d="M-25-20h36q14 0 14 11T9 3q-4 8-12 8h-12q-10 0-10-10zM11-14v12q8 0 8-6t-8-6zM-24 17h40v5h-40z" fill-rule="evenodd"/></g>
              <g id="atm"><path d="M-27-18h54v28h-54zM-18-12q-4 2-4 8t4 8h36q4-2 4-8t-4-8zM-24 14h48v4h-48z" fill-rule="evenodd"/><circle cy="-4" r="8"/></g>
              <g id="atm2"><path d="M-26-24h52v12h-5v34h-42v-34h-5zM-16-14v20q2 10 6 12h20q4-2 6-12v-20z" fill-rule="evenodd"/><circle cy="0" r="8"/></g>
              <g id="stall"><path d="M-27-26h54v16h-4v36h-6V14h-34v12h-6v-36h-4zM-22-21v8h10v-8zM-7-21v8H7v-8zM12-21v8h10v-8zM-17-9V9h34V-9z" fill-rule="evenodd"/></g>
              <g id="wine"><path d="M-20-26h9v12q6 4 6 12v27h-20V-2q0-8 5-12zM2-8h26q0 17-10 18v11h7v4H6v-4h7V10Q2 8 2-8z"/></g>
              <g id="cart"><path d="M-25-14h42l5-10h5M17-14l-5 24h-32l-5-24M-19-6h34M-18 2h32M-10-14v24M4-14v24M-20 16h34" fill="none" stroke="#ac39ac" stroke-width="3.500"/><circle cx="-14" cy="21" r="3"/><circle cx="10" cy="21" r="3"/></g>
              <g id="basket"><path d="M-24-4h48v6h-4l-4 18h-32l-4-18h-4zM-12 4v12h3V4zM-2 4v12h3V4zM8 4v12h3V4zM-4-6L8-20l4 3-8 11z" fill-rule="evenodd"/></g>
              <g id="cocktail"><path d="M-22-22h44L4 2v14h14v5h-36v-5h14V2zM-14-17l4 5h20l4-5z" fill-rule="evenodd"/></g>
              <g id="park" fill="#0092da"><path d="M-24-24h20q14 0 14 13T-4 2h-11v14h-9zM-15-17v12h10q6 0 6-6t-6-6z" fill-rule="evenodd"/><g fill="none" stroke="#0092da" stroke-width="3.500"><circle cx="-4" cy="20" r="7"/><circle cx="18" cy="20" r="7"/><path d="M-4 20L4 8h8l6 12M4 20l8-10"/></g></g>
              <g id="light" fill="none" stroke="#666" stroke-width="3.500"><rect x="-8" y="-22" width="16" height="44" rx="7" fill="#f4efe8"/><circle cy="-12" r="4"/><circle r="4"/><circle cy="12" r="4"/></g>
              <g id="tap"><path d="M-16-2h30l-5 26h-20zM-10 4l1 6h16l1-6zM-8-18h18l14-3v5l-12 3v5H2v-5h-10zM0-26h14v4H0z" fill-rule="evenodd"/></g>
              <g id="arr"><path d="M-20-2.500H4v-6L20 0 4 8.500V2.500h-24z"/></g>
              <g id="med" fill="#c1001f"><path d="M-26-6h14q2-16 12-16t12 16h14v28h-52z"/><path d="M-3-4h7v7h7v6H4v7h-7V9h-8V3h8z" fill="#fff"/></g>
              <g id="rails">
                <path d="M90 25Q260 120 520 205T800 262L990 265Q1200 262 1400 215T1908 85"/>
                <path d="M190 30Q400 150 620 195T990 240Q1200 230 1450 180T1908 50"/>
                <path d="M300 30Q480 120 780 180T1080 205Q1300 190 1560 120T1908 25"/>
                <path d="M20 728L330 590 600 455Q740 390 990 325L1200 285 1480 200"/>
                <path d="M20 770L330 635 600 500Q740 430 960 370L1240 315 1480 265 1700 218 1908 155"/>
                <path d="M20 820L330 722 800 595Q1000 530 1250 450T1908 232"/>
                <path d="M20 862L330 772 800 640Q1000 575 1250 487T1908 268"/>
              </g>
            </defs>
            <path d="M0 0h1960v1960H0z" fill="#f1eee8"/>
            <!-- plazas and footways -->
            <g fill="#ffd6d1">
              <path d="M30 112L165 95 175 190 75 195 60 215 30 190zM860 260L960 140 1030 105 1240 132 1570 130 1610 215 1570 330 1480 480 1280 715 1130 850 960 720 930 540 860 400zM720 310L840 270 960 520 900 480zM830 800L930 700 980 780 880 860zM1130 1400l90-110 220 100-60 70-80 60z"/>
              <path d="M360 1385L430 1380 235 1908h-45L330 1560zM150 1500l60 40-80 240 200 30-5-30-190-30 100-220zM340 1720l90 15v-10l-80-30zM30 1800l95 20-10 45-85-20zM920 1620l60-40v140l-60 20zM560 1780l150-140 40 30-130 150zM480 1908l70-70 90 70zM1330 1240l120-200 70 20-130 260z"/>
            </g>
            <g fill="#f2dad9" stroke="#e6c6c4" stroke-width="2">
              <path d="M30 660L170 630 460 960 350 1000 200 905 30 905zM1590 620L1820 345 1908 395V930L1640 830zM1330 1280L1820 1560 1860 1700 1750 1840 1690 1810 1750 1700 1400 1400zM1100 1500l130 60v20l-110-40zM1440 1030l160 70-60 90-120-80z"/>
            </g>
            <!-- buildings -->
            <g fill="#d9d0c9" stroke="#c2b3a8" stroke-width="3">
              <path d="M30 33H190L150 108 30 112zM330 33H690L662 132Q500 110 400 60zM745 33H850L842 155 745 130z"/>
              <path d="M60 190L300 186 400 225 740 308 760 360 730 380 350 565 230 560 65 215z"/>
              <path d="M30 520l30-14 25 10 90 115-140 45zM340 620L640 520 720 600 400 710zM400 740L690 600 860 720 830 800 760 737 520 870z"/>
              <path d="M520 870L760 737 835 797 790 890 840 985 790 1030Q690 1050 620 1010L560 950zM725 480L840 430 970 520 860 690 760 570z"/>
              <path d="M30 922L110 915 120 888 200 905 205 930 340 960 345 1000 455 1000Q475 1080 465 1120L300 1180 30 1210z"/>
              <path d="M960 400L1080 370 1112 388 1110 425 1070 470 1030 480 975 450zM1135 550L1402 475 1290 640Q1260 655 1235 640zM960 620L1000 575 1190 720 1180 770 1060 830 920 800z"/>
              <path d="M1685 545L1820 370 1908 430V650L1790 600zM1505 740L1610 625 1908 800V910L1590 820 1510 780z"/>
              <path d="M30 1415L340 1388Q400 1390 385 1440L210 1908H30zM500 1350L680 1285Q760 1280 750 1330L560 1640 370 1720 480 1390z"/>
              <path d="M790 1620L960 1380 1180 1080 1330 1140 1310 1270 1190 1350 960 1580 950 1690 920 1720zM580 1840L720 1660 830 1740 800 1830 700 1908H620z"/>
              <path d="M960 1420l170-190 130 60-110 100 220 130 110-50 280 140-25 50 40 25 40-30 80 100-90 110L990 1490zM980 1600L1200 1680 1330 1720 1260 1908H1180L960 1780z"/>
              <path d="M1325 1640L1700 1850 1640 1908H1240zM770 1840l60-80 200 80 150 70H780zM1850 1760l60 50v100h-100z"/>
              <path d="M1390 1260L1470 1145 1540 1185 1590 1100 1530 1050 1560 960 1660 970 1908 1150V1620L1825 1560z"/>
              <path d="M1230 870l220-60-100 170zM1400 850l100-40 70 60-100 120-110-30z"/>
            </g>
            <g fill="none" stroke="#c2b3a8" stroke-width="3">
              <path d="M30 640L130 580M730 480L900 610M520 870L640 1010M830 440l-60 80M960 600L1060 830M1050 640L940 800M1560 680L1790 790M1530 720L1720 820M1690 1030L1908 1170M240 1400L160 1720M50 1420L30 1540 210 1570M30 1635L160 1680 130 1820M30 1840L210 1890M350 1000L350 1160M430 1480L540 1540M550 1380L700 1500 640 1600M520 1540l60-90M1100 1170L1240 1290M1060 1240L1200 1360M1020 1300L1130 1400M990 1350L1100 1450M860 1480L960 1560M830 1540L930 1620M1500 1480L1310 1900M1420 1420L1320 1680M1170 1110L1310 1220M1040 1640l-60 110M760 1880L820 1760"/>
            </g>
            <path d="M1670 1270L1728 1185 1908 1300 1865 1400z" fill="#f2dad9" stroke="#d8bdb9" stroke-width="3"/>
            <path d="M1205 1080L1300 960 1440 1010 1350 1182z" fill="#c4b6ab" stroke="#b09f92" stroke-width="3"/>
            <path d="M1080 33H1650L1630 55 1500 72 1350 137 1235 125z" fill="#cdebb0" stroke="#9cc088" stroke-width="2"/>
            <path d="M1150 60h440M1170 80h320M1200 100h240M1240 118h140" stroke="#a5d48a" stroke-width="3" stroke-dasharray="3 15"/>
            <g fill="#a9d391"><circle cx="1090" cy="40" r="18"/><circle cx="1250" cy="92" r="19"/><circle cx="1435" cy="50" r="19"/><circle cx="1490" cy="45" r="18"/><circle cx="1552" cy="42" r="18"/></g>
            <path d="M960 33H1080L1245 122 1205 155 1110 120z" fill="#c8c5b0" stroke="#aaa898" stroke-width="2"/>
            <path d="M1520 460L1660 190 1800 33H1908V150L1720 400 1590 500z" fill="#feead0" stroke="#b58a3c" stroke-width="4" stroke-dasharray="14 10"/>
            <path d="M200 60L165 120 300 190 735 305 760 250 860 155 670 130 600 190 420 180 230 60z" fill="#b9b9b9"/>
            <!-- minor streets -->
            <g fill="none" stroke="#c9c9c9">
              <path d="M722 25L700 190 770 300 820 390 960 500 1290 745 1400 760 1710 955 1920 1090" stroke-width="48"/>
              <path d="M15 340L100 450 260 660 500 985 610 1150M15 485L110 430" stroke-width="54"/>
              <path d="M1220 1250L1400 1370 1660 1550 1810 1710 1910 1800" stroke-width="40"/>
              <path d="M850 1400L960 1480 1260 1630 1720 1830 1810 1710" stroke-width="46"/>
            </g>
            <g fill="none" stroke="#fff" stroke-linejoin="round" stroke-linecap="round">
              <path d="M20 165Q150 150 340 160L480 200H700" stroke-width="30"/>
              <path d="M950 20L1115 135" stroke-width="40"/>
              <path d="M722 25L700 190 770 300 820 390 960 500 1290 745 1400 760 1710 955 1920 1090" stroke-width="43"/>
              <path d="M15 340L100 450 260 660 500 985 610 1150M15 485L110 430" stroke-width="49"/>
              <path d="M1060 1150L1220 1250 1400 1370 1660 1550 1810 1710" stroke-width="35"/>
              <path d="M1810 1710L1910 1800M1430 1120L1330 1275" stroke-width="22"/>
              <path d="M850 1400L960 1480 1260 1630 1720 1830 1810 1710" stroke-width="42"/>
              <path d="M680 1595L830 1690 980 1790M510 1790L700 1920" stroke-width="28"/>
              <path d="M1780 215L1920 320M1850 580L1930 650" stroke-width="60"/>
            </g>
            <g fill="none" stroke="#e6e6e6" stroke-width="20" stroke-linecap="round"><path d="M1215 1243l50 30M1290 1295l40 26M1360 1342l36 24M1690 1580l30 34M1745 1640l30 34"/></g>
            <path d="M505 225L580 350 660 520 760 600 880 720 990 840 1120 975" fill="none" stroke="#f1f1ef" stroke-width="30"/>
            <path d="M1115 140L1220 180M1240 220L1290 310 1100 540" fill="none" stroke="#dcdce8" stroke-width="48"/>
            <path d="M1570 820L1908 845V890L1575 862zM1568 933L1908 948V1000L1570 980z" fill="#b9b9b9" stroke="#8f8f8f" stroke-width="3"/>
            <path d="M1020 1700L1235 1800 1210 1880 1170 1908 980 1830zM825 1750L990 1830V1870L830 1790z" fill="#dddde8" stroke="#bcbcc8" stroke-width="2"/>
            <path d="M1390 1710L1760 1890 1740 1908 1390 1735zM1840 1700l25 15-50 90-25-15zM1280 1815l25 10-20 45-25-10z" fill="#ffffe0"/>
            <path d="M1695 375L1908 100M1660 290L1780 150" stroke="#aaa" stroke-width="20" stroke-linecap="round" fill="none"/>
            <!-- footpaths -->
            <g fill="none" stroke="#999" stroke-width="6" stroke-dasharray="16 10"><path d="M190 995L500 920 880 835 960 833M30 1035L350 960M460 1125L960 1015M120 1262L380 1160 460 1125M1000 830L1540 770 1600 800 1908 828M1690 420L1190 975 1100 1090M1190 980L1908 1020"/></g>
            <g fill="none" stroke="#fff" stroke-width="9"><path d="M30 255L140 450 175 465 330 370 580 345 760 355"/></g>
            <g fill="none" stroke="#fa8072" stroke-width="4.500" stroke-dasharray="14 8"><path d="M30 255L140 450 175 465 330 370 580 345 760 355M350 140L360 33M900 725L990 630M960 660L1040 590M465 1365L670 1485M760 1260l30 40M1280 1650L1170 1850M990 1800l110 50M1200 33l-20 40M1490 120L1720 40M1300 680l20 40M1310 295L1460 240M1240 930l80 50M1700 300l30-70 60 20"/></g>
            <g fill="none" stroke="#f77" stroke-width="10" stroke-dasharray="4 4"><path d="M1365 755L1570 860M1845 640V745M1845 860V915M1725 915H1908M1175 990L1345 1115M915 1050L1040 1030M1585 470l15-30"/></g>
            <!-- railways -->
            <use href="#rails" fill="none" stroke="#4c4c4c" stroke-width="30"/>
            <use href="#rails" fill="none" stroke="#a5a4a2" stroke-width="26"/>
            <use href="#rails" fill="none" stroke="#707070" stroke-width="22"/>
            <use href="#rails" fill="none" stroke="#f4f4f4" stroke-width="8" stroke-dasharray="26 27"/>
            <!-- primary road -->
            <path d="M20 1268L160 1262 320 1238 370 1195 600 1138 780 1098 945 1085 990 1055 1080 985 1315 720 1520 460Q1560 425 1590 470L1585 500 1410 740 1190 970 1090 1100 1060 1150 960 1290 860 1415 815 1438 680 1600 400 1920H300L500 1700 750 1395 755 1360 825 1245 460 1320 465 1370 440 1480 330 1720 290 1820 285 1920H240L245 1820 350 1560 420 1400 410 1340 380 1330 335 1312 170 1338 20 1342z" fill="#fcd6a4" stroke="#b58f45" stroke-width="4"/>
            <path d="M500 1235L620 1208M660 1198L880 1164" stroke="#b58f45" stroke-width="3"/>
            <path d="M620 1208l45-9M800 1173l-12 1" stroke="#fff" stroke-width="4"/>
            <!-- points of interest -->
            <g fill="#c77400">
              <use href="#fork" x="137" y="45"/><use href="#fork" x="797" y="62"/><use href="#fork" x="995" y="106"/><use href="#fork" x="1482" y="152"/><use href="#fork" x="294" y="523"/><use href="#fork" x="872" y="548"/><use href="#fork" x="309" y="864"/><use href="#fork" x="658" y="882"/><use href="#fork" x="1029" y="818"/><use href="#fork" x="1115" y="803"/><use href="#fork" x="290" y="1155"/><use href="#fork" x="91" y="1450"/><use href="#fork" x="230" y="1435"/><use href="#fork" x="575" y="1492"/><use href="#fork" x="1156" y="1230"/>
              <use href="#burger" x="1175" y="134"/><use href="#burger" x="102" y="659"/><use href="#burger" x="286" y="992"/><use href="#burger" x="1100" y="752"/><use href="#burger" x="1606" y="652"/><use href="#burger" x="1782" y="471"/><use href="#burger" x="1869" y="464"/><use href="#burger" x="1908" y="170"/><use href="#burger" x="500" y="1450"/><use href="#burger" x="905" y="1521"/>
              <use href="#pint" x="1040" y="443"/><use href="#pint" x="222" y="782"/><use href="#pint" x="410" y="1080"/><use href="#pint" x="166" y="1182"/><use href="#pint" x="455" y="1612"/><use href="#pint" x="1524" y="1006"/><use href="#pint" x="1332" y="1391"/><use href="#pint" x="1012" y="1912"/>
              <use href="#cup" x="325" y="1455"/><use href="#cup" x="1570" y="773"/><use href="#cup" x="1015" y="1398"/>
              <use href="#cocktail" x="1013" y="678"/><use href="#cocktail" x="1133" y="1575"/>
            </g>
            <g fill="#734a08">
              <use href="#atm" x="890" y="881"/><use href="#atm" x="1415" y="945"/><use href="#atm" x="620" y="1391"/><use href="#atm" x="867" y="1639"/><use href="#atm2" x="950" y="903"/><use href="#atm2" x="879" y="962"/><use href="#atm2" x="1337" y="934"/><use href="#tap" x="943" y="728"/><use href="#tap" x="1290" y="578"/>
              <path d="M1748 700h54v34h-54zM1645 634h44v44h-44zM453 1830h44v44h-44z"/><path d="M1750 702l25 18 25-18M1682 640l-12 16 12 20M490 1840l-12 12 12 18" fill="none" stroke="#f1eee8" stroke-width="4"/>
              <path d="M1318 412h12v20h-3v14h-6v-14h-3zM1339 400h4v46h-4zM1352 412h12v20h-3v14h-6v-14h-3zM330 1812h12v18h-3v10h-6v-10h-3zM322 1842h26v4h-26z"/><circle cx="1324" cy="404" r="5"/><circle cx="1358" cy="404" r="5"/><circle cx="336" cy="1805" r="5"/>
            </g>
            <g fill="#ac39ac">
              <path d="M118 360V344q4-14 26-14t26 14v16z"/><path d="M132 334l-3 12M145 334l-3 12M158 335l-3 12" stroke="#e6c6e4" stroke-width="3"/><use href="#wine" x="350" y="414"/><use href="#wine" x="796" y="518"/><use href="#stall" x="733" y="188"/><use href="#stall" x="830" y="319"/><use href="#stall" x="871" y="618"/><use href="#stall" x="733" y="390"/><use href="#cart" x="803" y="738"/><use href="#basket" x="618" y="1820"/><use href="#basket" x="1083" y="1322"/><path d="M684 1692h54v22h-10v-14h-34v14h-10z"/><circle cx="711" cy="1712" r="10"/><circle cx="702" cy="1727" r="9"/><circle cx="720" cy="1727" r="9"/><path d="M703 1742l8-14 8 14z"/><rect x="956" y="1498" width="22" height="48" rx="10" fill="none" stroke="#ac39ac" stroke-width="4"/><path d="M967 1508v26" stroke="#ac39ac" stroke-width="5"/><circle cx="1222" cy="1188" r="12"/>
            </g>
            <use href="#park" x="230" y="1218"/><use href="#park" x="508" y="1308"/><use href="#park" x="391" y="1791"/><use href="#park" x="242" y="1862"/><use href="#park" x="1014" y="1236"/><use href="#park" x="1824" y="1664"/>
            <g fill="none" stroke="#0092da" stroke-width="6"><path d="M1345 749h-10v40h10M1365 749h12v40h-12M1355 752v34M1348 760l7-8 7 8M1348 778l7 8 7-8M1373 1009h-10v38h10M1391 1009h10v38h-10M1382 1011v34M1375 1019l7-8 7 8M1375 1037l7 8 7-8M898 1036h24v30h-24M892 1051h20M1290 968h20v30h-20M1278 983h24M157 1341h27v30h-27zM157 1356h27M160 1371v6M181 1371v6"/></g>
            <use href="#light" x="728" y="1146"/><use href="#light" x="907" y="1292"/><use href="#light" x="813" y="1326"/><use href="#light" x="1470" y="590"/><use href="#light" x="1541" y="842"/><use href="#light" x="1203" y="898"/>
            <use href="#med" x="1689" y="838"/><use href="#med" x="1757" y="876"/><use href="#med" x="1817" y="909"/>
            <path d="M1234 1132h38l2 38h-38zM1240 1118h28v12h-28zM518 1895h38v20h-38z" fill="#c1001f"/><path d="M1254 1138v26M1241 1151h26" stroke="#fff" stroke-width="6"/>
            <circle cx="230" cy="1682" r="11" fill="#4764a8"/><path d="M1866 500h22v22h-22z" fill="#7c86b8"/>
            <g fill="#b0a296"><path d="M160 1400h18v18h-18zM198 1395h18v18h-18zM452 1108h18v18h-18zM636 1737h18v18h-18zM1131 1145h18v18h-18zM1100 1178h18v18h-18zM1086 1197h18v18h-18zM1018 1276h18v18h-18zM981 1324h18v18h-18z"/></g>
            <g fill="#333"><use href="#arr" transform="translate(922 465) rotate(215)"/><use href="#arr" transform="translate(480 970) rotate(225)"/><use href="#arr" transform="translate(1488 808) rotate(207)"/><use href="#arr" transform="translate(1275 335) rotate(-50)"/></g>
            <g fill="#5b4300"><use href="#arr" transform="translate(647 1162) rotate(-3)"/><use href="#arr" transform="translate(880 1200) rotate(177)"/><use href="#arr" transform="translate(320 1692) rotate(-70)"/><use href="#arr" transform="translate(1706 186) rotate(-50)"/><use href="#arr" transform="translate(1570 464) rotate(140)"/></g>
            <g fill="#333" font-size="34" text-anchor="middle"><text x="752" y="1656">≠</text><text x="1175" y="92">≠</text><text x="1329" y="1288">≠</text><text x="1026" y="898">≠</text><text x="1868" y="1772">≠</text></g>
            <!-- labels -->
            <g stroke="#fff" stroke-opacity=".6" stroke-width="7" paint-order="stroke" stroke-linejoin="round" text-anchor="middle">
              <g fill="#c48021">
                <text x="355" y="40" textLength="205">Tacos Padre</text><text x="795" y="131" textLength="201">fish!kitchen</text><text x="998" y="174" textLength="176">Altamarea</text><text x="1482" y="222" textLength="122">Whisky</text><text x="1482" y="266" textLength="118">Ginger</text><text x="292" y="591" textLength="88">roast</text><text x="103" y="729" textLength="137">Porteña</text><text x="658" y="953" textLength="143">Brindisa</text><text x="1040" y="514" textLength="175">The Globe</text><text x="1014" y="756" textLength="66">Flor</text><text x="1115" y="874" textLength="204">Seoul tokyo</text><text x="411" y="1151" textLength="188">Southwark</text><text x="411" y="1195" textLength="115">Tavern</text><text x="92" y="1521" textLength="67">Pho</text><text x="229" y="1506" textLength="125">Honest</text><text x="229" y="1550" textLength="139">Burgers</text><text x="575" y="1561" textLength="113">Alma's</text><text x="456" y="1682" textLength="190">The Bridge</text><text x="456" y="1726" textLength="60">Tap</text><text x="1014" y="1470" textLength="180">Café Rossi</text><text x="1526" y="1074" textLength="110">Bunch</text><text x="1526" y="1119" textLength="171">of Grapes</text><text x="1333" y="1461" textLength="175">Old King's</text><text x="1332" y="1505" textLength="91">Head</text><text x="1135" y="1652" textLength="183">The Coach</text><text x="1135" y="1697" textLength="112">House</text><text x="1135" y="1742" textLength="58">Bar</text>
              </g>
              <g fill="#ac39ac"><text x="143" y="418" textLength="196">Monmouth</text><text x="354" y="486" textLength="143">Utobeer</text><text x="872" y="693" textLength="160">tea 2 you</text><text x="965" y="1597" textLength="120">Ryman</text><text x="711" y="1790" textLength="108">Paddy</text><text x="711" y="1834" textLength="108">Power</text></g>
              <g fill="#7f6138"><text x="620" y="1454" textLength="153">HSBC UK</text><text x="867" y="1702" textLength="109">Lloyds</text><text x="868" y="1747" textLength="86">Bank</text></g>
              <g fill="#7d7d80"><text x="135" y="1050">24</text><text x="136" y="1096" textLength="146">The Hop</text><text x="136" y="1140" textLength="168">Exchange</text><text x="82" y="1889">54</text><text x="1316" y="1083">31</text><text x="1796" y="402">11</text><text x="1094" y="312" textLength="465" transform="rotate(-6 1094 300)">South Eastern Main Line</text><text x="1675" y="1876" fill="#aaa">Orchard</text></g>
              <g fill="#5c5c5c" font-size="43"><text x="1594" y="1278" textLength="86">New</text><text x="1594" y="1328" textLength="70">City</text><text x="1594" y="1377" textLength="106">Court</text></g>
              <g fill="#5965ae" font-weight="700"><text x="1874" y="577">London</text><text x="1874" y="627">Bridge</text></g>
              <g fill="#262626" font-size="40"><text x="212" y="171" textLength="297">Rochester Walk</text>
                <text transform="translate(1195 682) rotate(38)" y="12" textLength="260">Bedale Street</text>
                <text transform="translate(375 838) rotate(54)" y="12" textLength="260">Stoney Street</text>
                <text transform="translate(690 1240) rotate(-11)" y="12" textLength="332">Southwark Street</text>
                <text transform="translate(1535 1460) rotate(36)" y="12" textLength="335">King's Head Yard</text>
                <text transform="translate(1400 1690) rotate(28)" y="12" textLength="310">White Hart Yard</text>
                <text transform="translate(1815 1025) rotate(34)" y="12" textLength="245">St. Thomas S</text>
                <path id="bor" d="M348 1665Q455 1440 455 1360T418 1270" fill="none" stroke="none"/>
                <path id="bed" d="M727 240Q760 360 880 450" fill="none" stroke="none"/>
                <text text-anchor="start"><textPath href="#bor">Borough High Street</textPath></text>
                <text text-anchor="start" font-size="39"><textPath href="#bed">Bedale Street</textPath></text>
                <text transform="translate(372 1905) rotate(-50)">er</text>
              </g>
            </g>
          </svg>
          <div class="absolute right-0 bottom-0 h-[20px] w-[293px] bg-white/80 pl-[5px] pb-[1px] flex items-center whitespace-nowrap text-[15px] leading-[19px] text-[#333] font-['Liberation_Sans',sans-serif]">
            <svg class="w-[16px] h-[10px] mr-[4px]" viewBox="0 0 15 10" preserveAspectRatio="none"><path d="M0 0h15v5H0z" fill="#4c7be1"/><path d="M0 5h15v5H0z" fill="#ffd500"/></svg><span class="text-[#0078a8]">Leaflet</span>&nbsp;|&nbsp;©&nbsp;<span class="text-[#0078a8]">OpenStreetMap</span>&nbsp;contributors
          </div>
        </div>

        <form class="ml-[124px] mt-[52px] w-[625px] h-[714px] rounded-[10px] border border-[#ff2a2a] shadow-[0_0_12px_rgba(0,0,0,0.1)] pl-[25px] pr-[24px] flex flex-col font-bold text-[19px] text-black">
          <h2 class="mt-[44px] h-[44px] leading-[44px] text-[29px]">Add New Address</h2>
          <div class="flex justify-between mt-[20px]">
            <div class="w-[182px]"><div class="h-[32px] leading-[26px]">City:</div>
              <div class="h-[43px] rounded-[5px] border border-[#d2d2d2] bg-[#efefef] flex items-center justify-between pl-[15px] pr-[5px] pb-[1px] font-normal text-[16px] font-['Liberation_Sans',sans-serif]">Select City<svg class="w-[12px] h-[8px]" viewBox="0 0 12 8"><path d="M1 1l5 5 5-5" fill="none" stroke="#000" stroke-width="2"/></svg></div></div>
            <div class="w-[239px]"><div class="h-[32px] leading-[26px] tracking-[0.1px]">Area:</div>
              <div class="h-[99px] rounded-[5px] border border-[#d2d2d2] flex justify-end items-end"><svg class="size-[10px]" viewBox="0 0 10 10"><path d="M1 9l8-8M5 9l4-4" stroke="#666"/></svg></div></div>
          </div>
          <div class="flex justify-between mt-[21px]">
            <div class="w-[244px]"><div class="h-[32px] leading-[26px] tracking-[0.15px]">Floor No:</div><div class="h-[43px] rounded-[5px] border border-[#d2d2d2]"></div></div>
            <div class="w-[244px]"><div class="h-[32px] leading-[26px] tracking-[0.15px]">Flat No:</div><div class="h-[43px] rounded-[5px] border border-[#d2d2d2]"></div></div>
          </div>
          <div class="mt-[16px] h-[32px] leading-[26px] tracking-[-0.2px]">Name:</div><div class="h-[43px] rounded-[5px] border border-[#d2d2d2]"></div>
          <div class="mt-[16px] h-[32px] leading-[26px]">Mobile Number:</div><div class="h-[43px] rounded-[5px] border border-[#d2d2d2]"></div>
          <div class="mt-[24px] h-[26px] leading-[26px] tracking-[0.2px]">Add a label:</div>
          <div class="mt-[25px] h-[26px] flex items-center pl-[5px]">
            <i class="size-[15px] mt-[5px] rounded-[3px] border border-[#767676] mr-[5px]"></i><span class="w-[74px]">Home</span>
            <i class="size-[15px] mt-[5px] rounded-[3px] border border-[#767676] mr-[4px]"></i><span class="w-[77px] tracking-[0.4px]">Office</span>
            <i class="size-[15px] mt-[5px] rounded-[3px] border border-[#767676] mr-[5px]"></i><span>Heart</span>
          </div>
          <div class="mt-[24px] w-[87px] h-[45px] shrink-0 rounded-[5px] bg-[#007bff] text-white font-normal text-[16px] flex items-center justify-center pb-[2px] font-['Liberation_Sans',sans-serif]">Save</div>
        </form>
      </div>
    </div>
    <!-- scrollbar -->
    <div class="w-[15px] h-[932px] bg-[#f1f1f1] flex flex-col items-center py-[6px]">
      <i class="border-x-4 border-x-transparent border-b-4 border-b-[#505050]"></i>
      <div class="w-[11px] h-[840px] mt-[67px] bg-[#c1c1c1]"></div>
      <i class="mt-auto border-x-4 border-x-transparent border-t-4 border-t-[#a3a3a3]"></i>
    </div>
  </div>
</main>
</div>
</body>
</html>
